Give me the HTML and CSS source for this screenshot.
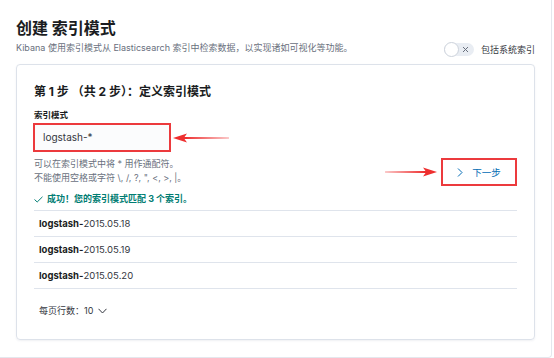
FILE: index.html
```html
<!DOCTYPE html>
<html lang="zh-CN">
<head>
    <meta charset="UTF-8">
    <meta name="viewport" content="width=device-width, initial-scale=1.0">
    <title>创建索引模式</title>
    <link rel="stylesheet" href="styles.css">
</head>
<body>

    <div class="page">
        <header class="page-header">
            <h1>创建 索引模式</h1>
            <div class="subtitle-row">
                <p class="subtitle">Kibana 使用索引模式从 Elasticsearch 索引中检索数据，以实现诸如可视化等功能。</p>
                <label class="switch">
                    <span class="switch-track">
                        <span class="switch-knob"></span>
                        <svg class="switch-x" width="7" height="7" viewBox="0 0 7 7">
                            <path d="M1 1 L6 6 M6 1 L1 6" stroke="#69707d" stroke-width="1" fill="none"/>
                        </svg>
                    </span>
                    <span class="switch-label">包括系统索引</span>
                </label>
            </div>
        </header>

        <div class="card">
            <h2>第 1 步 （共 2 步）：定义索引模式</h2>

            <div class="form-row">
                <div class="form-col">
                    <div class="field-label">索引模式</div>
                    <div class="input-line">
                        <div class="pattern-input">logstash-*</div>
                        <svg class="arrow-left" width="56" height="10" viewBox="0 0 56 10">
                            <polygon points="0,5 14,0.5 11.5,4 56,4.7 56,5.3 11.5,6 14,9.5" fill="#ee2f2f"/>
                        </svg>
                    </div>
                    <div class="help-text">
                        可以在索引模式中将 * 用作通配符。<br>
                        不能使用空格或字符 \, /, ?, ", &lt;, &gt;, |。
                    </div>
                </div>

                <div class="next-group">
                    <svg class="arrow-right" width="52" height="10" viewBox="0 0 52 10">
                        <polygon points="52,5 38,0.5 40.5,4 0,4.7 0,5.3 40.5,6 38,9.5" fill="#ee2f2f"/>
                    </svg>
                    <button class="next-btn">
                        <svg width="6" height="9" viewBox="0 0 6 9">
                            <polyline points="1,0.5 5,4.5 1,8.5" stroke="#006bb4" stroke-width="1" fill="none"/>
                        </svg>
                        <span>下一步</span>
                    </button>
                </div>
            </div>

            <div class="success">
                <svg width="9" height="7" viewBox="0 0 9 7">
                    <polyline points="0.5,3.5 3.2,6 8.5,0.8" stroke="#017d73" stroke-width="1" fill="none"/>
                </svg>
                <span>成功！您的索引模式匹配 3 个索引。</span>
            </div>

            <div class="index-list" id="index-list">
                <!-- rows added here -->
            </div>

            <div class="pager">
                每页行数：10
                <svg width="9" height="6" viewBox="0 0 9 6">
                    <polyline points="0.5,0.8 4.5,5 8.5,0.8" stroke="#343741" stroke-width="1" fill="none"/>
                </svg>
            </div>
        </div>
    </div>

    <script>
        const indices = ["2015.05.18", "2015.05.19", "2015.05.20"];
        const list = document.getElementById("index-list");
        indices.forEach(date => {
            const row = document.createElement("div");
            row.className = "index-row";
            row.innerHTML = `<b>logstash-</b>${date}`;
            list.appendChild(row);
        });
    </script>

</body>
</html>
```

FILE: styles.css
```css
/* General Styles */
body {
    margin: 0;
    padding: 0;
    background-color: #ffffff;
    font-family: "Inter", "Noto Sans CJK SC", sans-serif;
    color: #343741;
}

.page {
    box-sizing: border-box;
    width: 552px;
    height: 358px;
    padding: 16px 16px 0 16px;
    border-right: 1px solid #e4e7ed;
    border-bottom: 1px solid #e4e7ed;
    border-bottom-right-radius: 4px;
}

/* Header */
h1 {
    margin: 0;
    font-size: 16px;
    line-height: 25px;
    font-weight: 700;
    color: #1a1c21;
}

.subtitle-row {
    display: flex;
    justify-content: space-between;
    align-items: center;
    height: 14px;
}

.subtitle {
    margin: 0;
    font-size: 9px;
    line-height: 14px;
    color: #69707d;
}

.switch {
    display: flex;
    align-items: center;
    gap: 7px;
    margin-top: 3px;
}

.switch-track {
    position: relative;
    display: flex;
    align-items: center;
    justify-content: flex-end;
    width: 30px;
    height: 13px;
    padding-right: 5px;
    box-sizing: border-box;
    border-radius: 7px;
    background-color: #e9edf3;
}

.switch-knob {
    position: absolute;
    left: 0;
    top: -1px;
    width: 13px;
    height: 13px;
    border-radius: 50%;
    background-color: #ffffff;
    border: 1px solid #ccd2db;
}

.switch-label {
    font-size: 9px;
    color: #343741;
}

/* Card */
.card {
    margin-top: 9px;
    height: 276px;
    box-sizing: border-box;
    padding: 19px 17px 0 17px;
    border: 1px solid #dde2ea;
    border-radius: 4px;
    box-shadow: 0 1px 2px rgba(152, 162, 179, 0.15);
}

.card h2 {
    margin: 0;
    font-size: 12px;
    line-height: 16px;
    font-weight: 700;
    color: #1a1c21;
}

.form-row {
    display: flex;
    justify-content: space-between;
    align-items: flex-end;
}

.field-label {
    margin-top: 9px;
    font-size: 8.5px;
    line-height: 12px;
    font-weight: 700;
    color: #1a1c21;
}

.input-line {
    display: flex;
    align-items: center;
    margin-top: 2px;
}

.pattern-input {
    box-sizing: border-box;
    width: 138px;
    height: 29px;
    margin-left: -1px;
    padding-left: 8px;
    border: 2px solid #ec3a3d;
    background-color: #fbfcfd;
    font-size: 10px;
    line-height: 25px;
    color: #343741;
}

.arrow-left {
    margin-left: 2px;
}

.help-text {
    margin-top: 5px;
    font-size: 9px;
    line-height: 13.5px;
    color: #69707d;
}

.next-group {
    display: flex;
    align-items: center;
    margin-bottom: -2px;
}

.arrow-right {
    margin-right: 4px;
}

.next-btn {
    display: flex;
    align-items: center;
    justify-content: center;
    gap: 9px;
    width: 76px;
    height: 28px;
    padding: 0;
    border: 2px solid #ec3a3d;
    background-color: #ffffff;
    font-family: inherit;
    font-size: 9.5px;
    color: #006bb4;
    cursor: pointer;
}

.success {
    display: flex;
    align-items: center;
    gap: 4px;
    margin-top: 8px;
    font-size: 9px;
    line-height: 14px;
    font-weight: 700;
    color: #017d73;
}

/* Index list */
.index-list {
    margin-top: 4px;
    border-bottom: 1px solid #dfe4ec;
}

.index-row {
    height: 25px;
    padding-left: 5px;
    border-top: 1px solid #dfe4ec;
    font-size: 9.5px;
    line-height: 25px;
    color: #343741;
}

.index-row b {
    color: #1a1c21;
}

.pager {
    display: flex;
    align-items: center;
    gap: 5px;
    margin-top: 15px;
    padding-left: 5px;
    font-size: 9px;
    line-height: 14px;
    color: #343741;
}
```
